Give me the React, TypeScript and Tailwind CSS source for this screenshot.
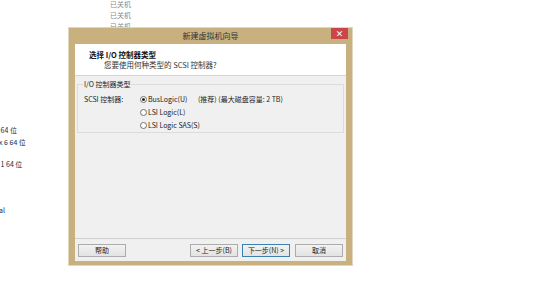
import React from "react";

const font = { fontFamily: '"Noto Sans CJK SC", "Liberation Sans", sans-serif' };

function Radio({ checked, label }: { checked?: boolean; label: string }) {
  return (
    <div className="flex h-[13px] items-center gap-[1px]">
      <span className="flex h-[7px] w-[7px] items-center justify-center rounded-full border border-[#707070] bg-white">
        {checked && <span className="h-[3px] w-[3px] rounded-full bg-[#222]" />}
      </span>
      <span>{label}</span>
    </div>
  );
}

function Btn({ label, active }: { label: string; active?: boolean }) {
  return (
    <button
      className={
        "flex h-[13px] w-[48px] items-center justify-center border bg-gradient-to-b from-[#f2f2f2] to-[#e3e3e3] text-[7px] leading-none text-[#222] " +
        (active ? "border-[#3c7fb1]" : "border-[#acacac]")
      }
    >
      {label}
    </button>
  );
}

export default function App() {
  return (
    <div className="relative h-[307px] w-[554px] overflow-hidden bg-white" style={font}>
      {/* background list behind the dialog */}
      <div className="absolute left-[110px] top-0 flex flex-col gap-[3px] text-[7px] leading-[8px] text-[#8a8a8a]">
        <span>已关机</span>
        <span>已关机</span>
        <span>已关机</span>
      </div>
      <div className="absolute left-[-1px] top-[124px] text-[7px] leading-[12px] text-[#1c2a3e]">
        <div>&nbsp;64 位</div>
        <div>x 6 64 位</div>
        <div className="mt-[10px]">&nbsp;1 64 位</div>
        <div className="mt-[34px]">al</div>
      </div>

      {/* dialog window */}
      <div className="absolute left-[68px] top-[27px] flex h-[239px] w-[285px] flex-col border border-[#e2d6c0] bg-[#c8b07f] px-[6px] pb-[4px]">
        <div className="relative flex h-[16px] items-center justify-center text-[8px] text-[#333]">
          新建虚拟机向导
          <span className="absolute right-[-2px] top-0 flex h-[11px] w-[17px] items-center justify-center bg-[#c9474a] text-[8px] font-bold leading-none text-white">
            ×
          </span>
        </div>
        <div className="flex flex-1 flex-col bg-[#f0f0f0]">
          <div className="flex h-[32px] flex-col justify-center border-b border-[#d5d5d5] bg-white pl-[14px] text-[7.5px] leading-[10px] text-[#111]">
            <div className="font-bold">选择 I/O 控制器类型</div>
            <div className="pl-[15px] text-[#333]">您要使用何种类型的 SCSI 控制器?</div>
          </div>
          <div className="px-[2px] pt-[8px]">
            <div className="relative h-[49px] border border-[#dcdcdc] px-[6px] pt-[8px] text-[7px] text-[#222]">
              <span className="absolute left-[5px] top-[-6px] bg-[#f0f0f0] px-[1px] leading-[11px]">I/O 控制器类型</span>
              <div className="flex">
                <span className="w-[56px] leading-[13px]">SCSI 控制器:</span>
                <div className="flex flex-col">
                  <div className="flex">
                    <div className="w-[58px]">
                      <Radio checked label="BusLogic(U)" />
                    </div>
                    <span className="leading-[13px]">(推荐) (最大磁盘容量: 2 TB)</span>
                  </div>
                  <Radio label="LSI Logic(L)" />
                  <Radio label="LSI Logic SAS(S)" />
                </div>
              </div>
            </div>
          </div>
          <div className="mt-auto border-t border-[#d0d0d0] px-[3px] pb-[4px] pt-[5px]">
            <div className="flex items-center">
              <Btn label="帮助" />
              <div className="ml-auto flex gap-[4px]">
                <Btn label="< 上一步(B)" />
                <Btn label="下一步(N) >" active />
                <div className="ml-[1px]">
                  <Btn label="取消" />
                </div>
              </div>
            </div>
          </div>
        </div>
      </div>
    </div>
  );
}
